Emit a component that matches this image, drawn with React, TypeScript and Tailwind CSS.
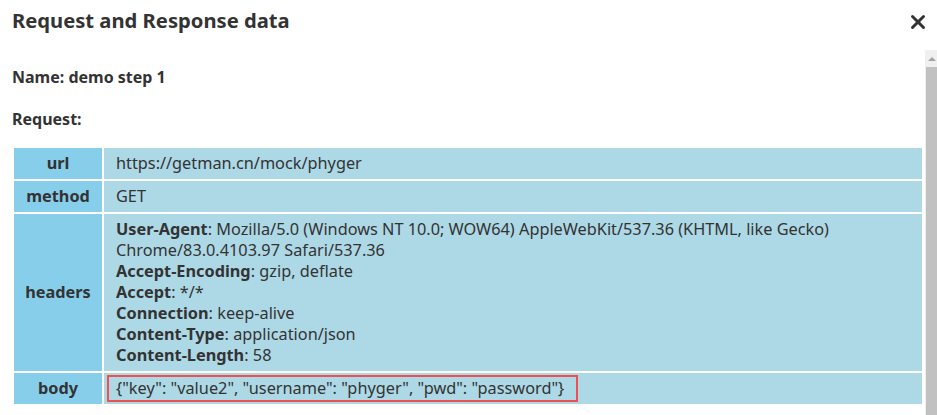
import { X } from 'lucide-react';

const headers: [string, string][] = [
  ['User-Agent', 'Mozilla/5.0 (Windows NT 10.0; WOW64) AppleWebKit/537.36 (KHTML, like Gecko) Chrome/83.0.4103.97 Safari/537.36'],
  ['Accept-Encoding', 'gzip, deflate'],
  ['Accept', '*/*'],
  ['Connection', 'keep-alive'],
  ['Content-Type', 'application/json'],
  ['Content-Length', '58'],
];

const App = () => {
  return (
    <div className="w-[937px] h-[415px] overflow-hidden bg-white text-[#333] font-['Noto_Sans',sans-serif]">
      <div className="flex items-start justify-between h-[50px] pl-3 pr-[8px] pt-[4px]">
        <h2 className="text-[20.2px] font-bold leading-[32px]">Request and Response data</h2>
        <button className="mt-[7px] text-[#333]">
          <X size={22} strokeWidth={3.2} />
        </button>
      </div>

      <div className="flex h-[365px]">
        <div className="flex-1 pl-3 pr-[1px]">
          <p className="text-[16px] font-bold leading-[22px] mt-[16px]">Name: demo step 1</p>
          <p className="text-[16px] font-bold leading-[22px] mt-[20px]">Request:</p>

          <table className="mt-[16px] w-[912px] border-separate border-spacing-[2px] text-[16.3px] leading-[21px]">
            <tbody>
              <tr>
                <th className="w-[88px] bg-[#87ceeb] py-[5px] font-bold text-center">url</th>
                <td className="bg-[#add8e6] py-[5px] px-3">https://getman.cn/mock/phyger</td>
              </tr>
              <tr>
                <th className="bg-[#87ceeb] py-[5px] font-bold text-center">method</th>
                <td className="bg-[#add8e6] py-[5px] px-3">GET</td>
              </tr>
              <tr>
                <th className="bg-[#87ceeb] py-[5px] font-bold text-center">headers</th>
                <td className="bg-[#add8e6] py-[5px] px-3">
                  {headers.map(([k, v]) => (
                    <div key={k}>
                      <span className="font-bold">{k}</span>: {v}
                    </div>
                  ))}
                </td>
              </tr>
              <tr>
                <th className="bg-[#87ceeb] py-[5px] font-bold text-center">body</th>
                <td className="bg-[#add8e6] py-[2px] pl-[3px]">
                  <span className="inline-block border-2 border-[#f05050] pl-[7px] pr-[12px] py-[1px]">
                    {'{"key": "value2", "username": "phyger", "pwd": "password"}'}
                  </span>
                </td>
              </tr>
            </tbody>
          </table>
        </div>

        <div className="w-[14px] bg-[#f0f0f0] flex flex-col items-end">
          <div className="w-full h-[17px] flex items-center justify-center pl-[2px]">
            <div className="w-0 h-0 border-l-[4px] border-r-[4px] border-b-[4px] border-l-transparent border-r-transparent border-b-[#a3a3a3]" />
          </div>
          <div className="w-[11px] flex-1 bg-[#c1c1c1]" />
        </div>
      </div>
    </div>
  );
};

export default App;
